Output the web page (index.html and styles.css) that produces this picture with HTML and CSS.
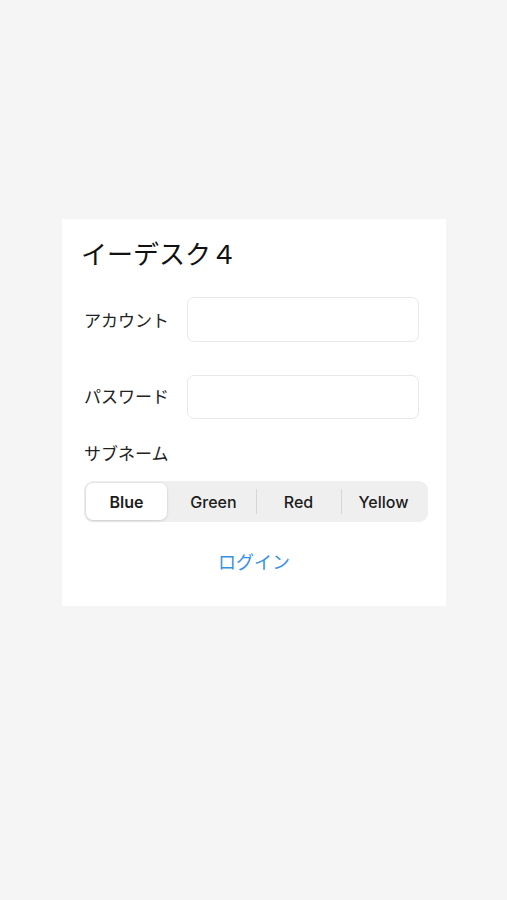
FILE: index.html
```html
<!DOCTYPE html>
<html>
<head>
    <meta charset="utf-8">
    <title>イーデスク４</title>
    <link rel="stylesheet" href="styles.css">
</head>
<body>
    <div class="card">
        <h1 class="title">イーデスク４</h1>

        <div class="row">
            <label class="label">アカウント</label>
            <input class="field" type="text">
        </div>
        <div class="row second">
            <label class="label">パスワード</label>
            <input class="field" type="password">
        </div>

        <div class="sub-label">サブネーム</div>
        <div class="segmented">
            <div class="seg active">Blue</div>
            <div class="seg">Green</div>
            <div class="seg sep">Red</div>
            <div class="seg sep">Yellow</div>
        </div>

        <div class="login">ログイン</div>
    </div>
</body>
</html>
```

FILE: styles.css
```css
body {
    margin: 0;
    height: 900px;
    background: #f5f5f5;
    font-family: Inter, "Noto Sans CJK JP", sans-serif;
    color: #222;
}

/* ログインカード */
.card {
    position: relative;
    top: 219px;
    margin-left: 62px;
    width: 384px;
    box-sizing: border-box;
    background: #fff;
    padding: 18px 18px 31px 22px;
}

.title {
    margin: 0 0 0 -3px;
    font-size: 26px;
    line-height: 35px;
    font-weight: 400;
    color: #111;
}

/* 入力行 */
.row {
    display: flex;
    align-items: center;
    margin-top: 25px;
    height: 45px;
}
.row.second { margin-top: 33px; height: 44px; }
.label {
    width: 103px;
    font-size: 17px;
    color: #222;
}
.row.second .label { margin-top: -4px; }
.field {
    width: 232px;
    height: 100%;
    box-sizing: border-box;
    border: 1px solid #e8e8e8;
    border-radius: 7px;
    background: #fff;
    outline: none;
}

.sub-label {
    margin-top: 23px;
    font-size: 17px;
    line-height: 24px;
}

/* セグメント */
.segmented {
    display: grid;
    grid-template-columns: repeat(4, 1fr);
    margin-top: 15px;
    height: 41px;
    padding: 2px;
    box-sizing: border-box;
    background: #efeff0;
    border-radius: 9px;
}
.seg {
    position: relative;
    display: flex;
    align-items: center;
    justify-content: center;
    font-size: 16px;
    font-weight: 500;
    color: #1c1c1c;
}
.seg.active {
    margin-right: 4px;
    background: #fff;
    border-radius: 7px;
    font-weight: 600;
    box-shadow: 0 1px 3px rgba(0,0,0,0.12), 0 0 0 0.5px rgba(0,0,0,0.04);
}
.seg.sep::before {
    content: '';
    position: absolute;
    left: 0;
    top: 6px;
    bottom: 6px;
    width: 1px;
    background: #d6d6d8;
}

.login {
    margin: 29px 0 0 -4px;
    text-align: center;
    font-size: 18px;
    line-height: 24px;
    color: #3790e4;
}
```
